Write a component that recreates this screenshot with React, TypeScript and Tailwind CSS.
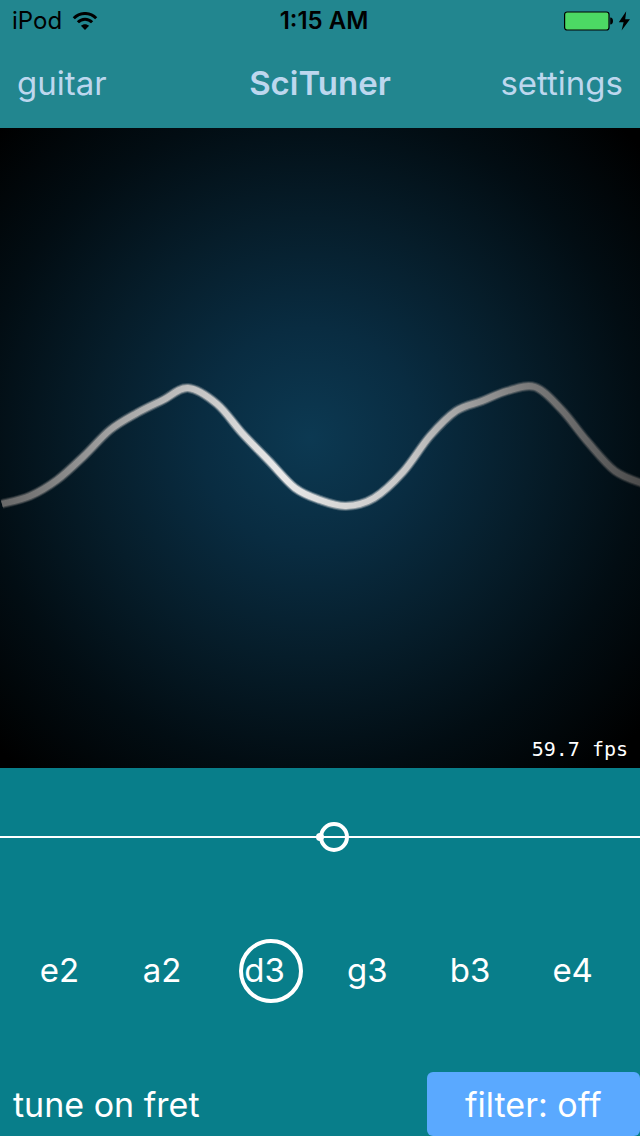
import React from "react";

type Point = [number, number];

const SAMPLES: Point[] = [
  [2, 504], [30, 496], [57, 480], [84, 456], [110, 430], [137, 413], [163, 400],
  [188, 388], [217, 404], [242, 433], [269, 461], [295, 488], [320, 500],
  [346, 506], [374, 498], [403, 472], [430, 436], [456, 411], [482, 401],
  [507, 391], [535, 387], [561, 409], [587, 441], [615, 471], [644, 484],
];

const SCOPE_TOP = 128;

/** Smooth curve through all samples (Catmull-Rom converted to cubic Béziers). */
function smoothPath(points: Point[]): string {
  const at = (i: number) => points[Math.max(0, Math.min(points.length - 1, i))];
  let d = `M${points[0][0]} ${points[0][1] - SCOPE_TOP}`;
  for (let i = 0; i < points.length - 1; i++) {
    const [p0, p1, p2, p3] = [at(i - 1), at(i), at(i + 1), at(i + 2)];
    const c1 = [p1[0] + (p2[0] - p0[0]) / 6, p1[1] + (p2[1] - p0[1]) / 6 - SCOPE_TOP];
    const c2 = [p2[0] - (p3[0] - p1[0]) / 6, p2[1] - (p3[1] - p1[1]) / 6 - SCOPE_TOP];
    d += `C${c1[0]} ${c1[1]} ${c2[0]} ${c2[1]} ${p2[0]} ${p2[1] - SCOPE_TOP}`;
  }
  return d;
}

const NOTES = ["e2", "a2", "d3", "g3", "b3", "e4"];
const ACTIVE_NOTE = "d3";

function StatusBar() {
  return (
    <div className="grid h-10 grid-cols-3 items-center pl-3 pr-2 pt-px text-2xl text-black">
      <div className="flex items-center gap-2.5">
        <span>iPod</span>
        <svg width="26" height="18" viewBox="-1 0 26 18" role="img" aria-label="Wi-Fi">
          <g fill="none" stroke="#000" strokeWidth="3">
            <path d="M.8 6.200C7-.1 17-.1 23.200 6.200" />
            <path d="M4.900 10.200c4-4.100 10.200-4.100 14.200 0" />
          </g>
          <path d="M12 18l-4.100-4.200c2.300-2.200 5.900-2.200 8.200 0z" />
        </svg>
      </div>
      <time className="pl-1 text-center font-semibold">1:15 AM</time>
      <div className="flex items-center justify-end gap-1">
        <svg width="50" height="20" viewBox="0 0 50 20" role="img" aria-label="Battery full">
          <rect x=".6" y="1" width="44.400" height="18" rx="2.500" fill="#4cd964" stroke="#000" strokeWidth="1.200" />
          <path d="M46.200 6.500c2 0 2.800 1.500 2.800 3.500s-.8 3.500-2.800 3.500z" />
        </svg>
        <svg width="14" height="20" viewBox="0 0 14 20" role="img" aria-label="Charging">
          <path d="M8.200.2L.8 11.200h4.800L3.600 19.600 12 8.200H7.200z" />
        </svg>
      </div>
    </div>
  );
}

function Scope() {
  const path = smoothPath(SAMPLES);
  return (
    <section className="relative bg-black">
      <svg viewBox="0 0 640 640" className="block w-full" role="img" aria-label="Waveform">
        <defs>
          <radialGradient id="glow" gradientUnits="userSpaceOnUse" cx="310" cy="310" r="440">
            <stop offset="0" stopColor="#0c3952" />
            <stop offset="0.25" stopColor="#092c41" />
            <stop offset="0.5" stopColor="#061d2a" />
            <stop offset="0.75" stopColor="#020d13" />
            <stop offset="1" stopColor="#000000" />
          </radialGradient>
          <radialGradient id="trace" gradientUnits="userSpaceOnUse" cx="290" cy="340" r="350">
            <stop offset="0" stopColor="#ebebeb" />
            <stop offset="0.35" stopColor="#c4c4c4" />
            <stop offset="0.7" stopColor="#7e7e7e" />
            <stop offset="1" stopColor="#4c4c4c" />
          </radialGradient>
        </defs>
        <rect width="640" height="640" fill="url(#glow)" />
        <g fill="none" stroke="url(#trace)" strokeLinejoin="round">
          <path d={path} strokeWidth="10" opacity="0.25" />
          <path d={path} strokeWidth="8" opacity="0.5" />
          <path d={path} strokeWidth="6" />
        </g>
      </svg>
      <p className="absolute bottom-[5px] right-3 font-['DejaVu_Sans_Mono',monospace] text-xl leading-7 text-white">
        59.7 fps
      </p>
    </section>
  );
}

function PitchMeter() {
  return (
    <div className="flex h-[138px] items-center justify-center">
      <div className="h-0.5 flex-1 bg-white" />
      <svg width="80" height="32" viewBox="0 0 80 32" role="img" aria-label="Pitch deviation">
        <path d="M0 16h80" stroke="#fff" strokeWidth="2" />
        <circle cx="40" cy="16" r="4" fill="#fff" />
        <circle cx="54" cy="16" r="13" fill="none" stroke="#fff" strokeWidth="4" />
      </svg>
      <div className="h-0.5 flex-1 bg-white" />
    </div>
  );
}

export default function App() {
  return (
    <main className="flex min-h-screen flex-col bg-[#087e8a] font-['Inter',sans-serif] text-white">
      <header className="bg-[#22868f]">
        <StatusBar />
        <nav className="grid h-[88px] grid-cols-3 items-center px-[17px] text-[33px] text-[#bdd7ee]">
          <button type="button" className="text-left">guitar</button>
          <h1 className="text-center font-semibold">SciTuner</h1>
          <button type="button" className="text-right">settings</button>
        </nav>
      </header>
      <Scope />
      <PitchMeter />
      <div className="grid grid-cols-6 pb-2 pl-2 pr-4 pt-[33px] text-[33px]">
        {NOTES.map((note) => (
          <button
            key={note}
            type="button"
            aria-pressed={note === ACTIVE_NOTE}
            className="relative flex h-16 items-center justify-center"
          >
            {note}
            {note === ACTIVE_NOTE && (
              <span className="absolute inset-y-0 right-[13px] w-16 rounded-full border-4 border-white" />
            )}
          </button>
        ))}
      </div>
      <footer className="mt-auto grid h-16 grid-cols-3 text-[34px]">
        <button type="button" className="col-span-2 pl-[13px] text-left">tune on fret</button>
        <button type="button" className="rounded-md bg-[#5aa9ff]">filter: off</button>
      </footer>
    </main>
  );
}
